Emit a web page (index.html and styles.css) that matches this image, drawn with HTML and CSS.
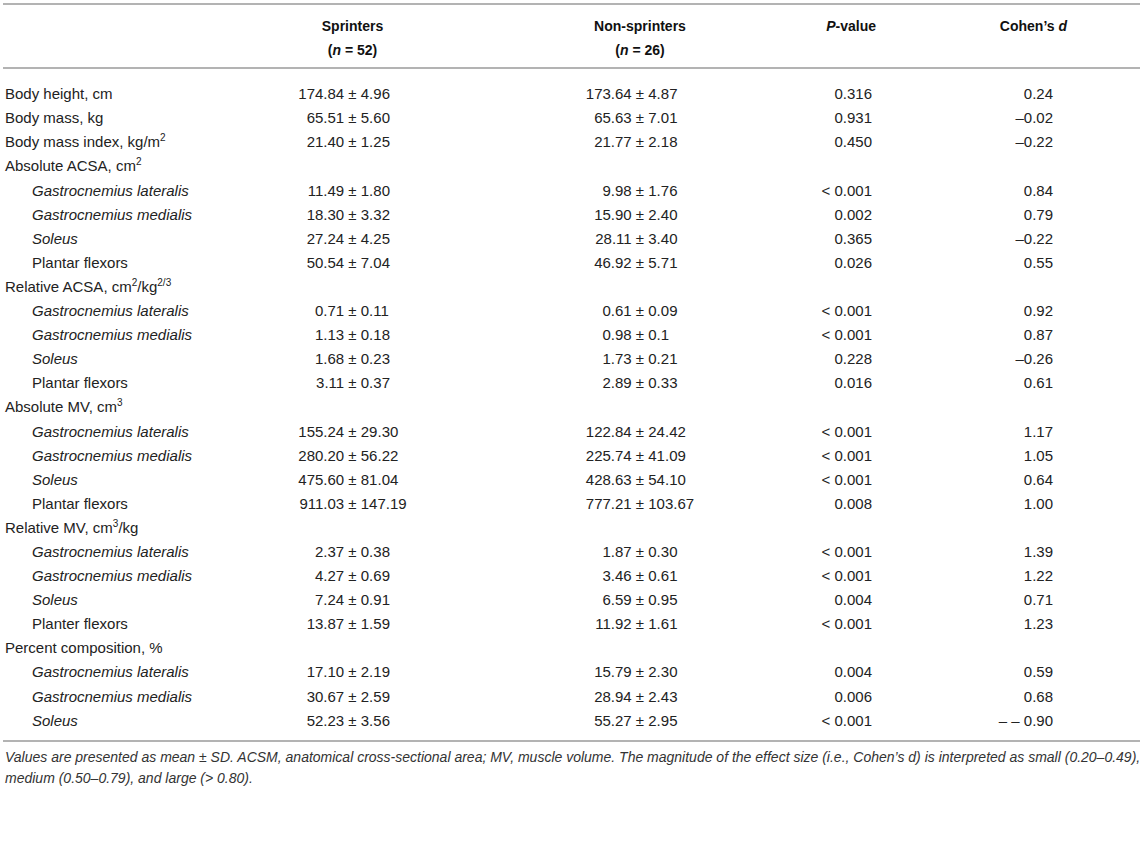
FILE: index.html
```html
<!DOCTYPE html>
<html lang="en">
<head>
<meta charset="utf-8">
<title>Table</title>
<link rel="stylesheet" href="styles.css">
</head>
<body>
<table class="data">
  <colgroup>
    <col class="c-label"><col class="c-spr"><col class="c-non"><col class="c-p"><col class="c-d">
  </colgroup>
  <thead>
    <tr class="h1">
      <th></th>
      <th class="num">Sprinters</th>
      <th class="non">Non-sprinters</th>
      <th class="p"><i>P</i>-value</th>
      <th class="d">Cohen’s <i>d</i></th>
    </tr>
    <tr class="h2">
      <th></th>
      <th class="num">(<i>n</i> = 52)</th>
      <th class="non">(<i>n</i> = 26)</th>
      <th></th>
      <th></th>
    </tr>
  </thead>
  <tbody>
    <tr class="first"><td class="lab">Body height, cm</td><td class="num"><span class="m">174.84</span> ± <span class="s">4.96</span></td><td class="non"><span class="m">173.64</span> ± <span class="s">4.87</span></td><td class="p">0.316</td><td class="d">0.24</td></tr>
    <tr><td class="lab">Body mass, kg</td><td class="num"><span class="m">65.51</span> ± <span class="s">5.60</span></td><td class="non"><span class="m">65.63</span> ± <span class="s">7.01</span></td><td class="p">0.931</td><td class="d">–0.02</td></tr>
    <tr><td class="lab">Body mass index, kg/m<sup>2</sup></td><td class="num"><span class="m">21.40</span> ± <span class="s">1.25</span></td><td class="non"><span class="m">21.77</span> ± <span class="s">2.18</span></td><td class="p">0.450</td><td class="d">–0.22</td></tr>
    <tr><td class="lab">Absolute ACSA, cm<sup>2</sup></td><td></td><td></td><td></td><td></td></tr>
    <tr><td class="sub"><i>Gastrocnemius lateralis</i></td><td class="num"><span class="m">11.49</span> ± <span class="s">1.80</span></td><td class="non"><span class="m">9.98</span> ± <span class="s">1.76</span></td><td class="p">&lt; 0.001</td><td class="d">0.84</td></tr>
    <tr><td class="sub"><i>Gastrocnemius medialis</i></td><td class="num"><span class="m">18.30</span> ± <span class="s">3.32</span></td><td class="non"><span class="m">15.90</span> ± <span class="s">2.40</span></td><td class="p">0.002</td><td class="d">0.79</td></tr>
    <tr><td class="sub"><i>Soleus</i></td><td class="num"><span class="m">27.24</span> ± <span class="s">4.25</span></td><td class="non"><span class="m">28.11</span> ± <span class="s">3.40</span></td><td class="p">0.365</td><td class="d">–0.22</td></tr>
    <tr><td class="sub">Plantar flexors</td><td class="num"><span class="m">50.54</span> ± <span class="s">7.04</span></td><td class="non"><span class="m">46.92</span> ± <span class="s">5.71</span></td><td class="p">0.026</td><td class="d">0.55</td></tr>
    <tr><td class="lab">Relative ACSA, cm<sup>2</sup>/kg<sup>2/3</sup></td><td></td><td></td><td></td><td></td></tr>
    <tr><td class="sub"><i>Gastrocnemius lateralis</i></td><td class="num"><span class="m">0.71</span> ± <span class="s">0.11</span></td><td class="non"><span class="m">0.61</span> ± <span class="s">0.09</span></td><td class="p">&lt; 0.001</td><td class="d">0.92</td></tr>
    <tr><td class="sub"><i>Gastrocnemius medialis</i></td><td class="num"><span class="m">1.13</span> ± <span class="s">0.18</span></td><td class="non"><span class="m">0.98</span> ± <span class="s">0.1</span></td><td class="p">&lt; 0.001</td><td class="d">0.87</td></tr>
    <tr><td class="sub"><i>Soleus</i></td><td class="num"><span class="m">1.68</span> ± <span class="s">0.23</span></td><td class="non"><span class="m">1.73</span> ± <span class="s">0.21</span></td><td class="p">0.228</td><td class="d">–0.26</td></tr>
    <tr><td class="sub">Plantar flexors</td><td class="num"><span class="m">3.11</span> ± <span class="s">0.37</span></td><td class="non"><span class="m">2.89</span> ± <span class="s">0.33</span></td><td class="p">0.016</td><td class="d">0.61</td></tr>
    <tr><td class="lab">Absolute MV, cm<sup>3</sup></td><td></td><td></td><td></td><td></td></tr>
    <tr><td class="sub"><i>Gastrocnemius lateralis</i></td><td class="num"><span class="m">155.24</span> ± <span class="s">29.30</span></td><td class="non"><span class="m">122.84</span> ± <span class="s">24.42</span></td><td class="p">&lt; 0.001</td><td class="d">1.17</td></tr>
    <tr><td class="sub"><i>Gastrocnemius medialis</i></td><td class="num"><span class="m">280.20</span> ± <span class="s">56.22</span></td><td class="non"><span class="m">225.74</span> ± <span class="s">41.09</span></td><td class="p">&lt; 0.001</td><td class="d">1.05</td></tr>
    <tr><td class="sub"><i>Soleus</i></td><td class="num"><span class="m">475.60</span> ± <span class="s">81.04</span></td><td class="non"><span class="m">428.63</span> ± <span class="s">54.10</span></td><td class="p">&lt; 0.001</td><td class="d">0.64</td></tr>
    <tr><td class="sub">Plantar flexors</td><td class="num"><span class="m">911.03</span> ± <span class="s">147.19</span></td><td class="non"><span class="m">777.21</span> ± <span class="s">103.67</span></td><td class="p">0.008</td><td class="d">1.00</td></tr>
    <tr><td class="lab">Relative MV, cm<sup>3</sup>/kg</td><td></td><td></td><td></td><td></td></tr>
    <tr><td class="sub"><i>Gastrocnemius lateralis</i></td><td class="num"><span class="m">2.37</span> ± <span class="s">0.38</span></td><td class="non"><span class="m">1.87</span> ± <span class="s">0.30</span></td><td class="p">&lt; 0.001</td><td class="d">1.39</td></tr>
    <tr><td class="sub"><i>Gastrocnemius medialis</i></td><td class="num"><span class="m">4.27</span> ± <span class="s">0.69</span></td><td class="non"><span class="m">3.46</span> ± <span class="s">0.61</span></td><td class="p">&lt; 0.001</td><td class="d">1.22</td></tr>
    <tr><td class="sub"><i>Soleus</i></td><td class="num"><span class="m">7.24</span> ± <span class="s">0.91</span></td><td class="non"><span class="m">6.59</span> ± <span class="s">0.95</span></td><td class="p">0.004</td><td class="d">0.71</td></tr>
    <tr><td class="sub">Planter flexors</td><td class="num"><span class="m">13.87</span> ± <span class="s">1.59</span></td><td class="non"><span class="m">11.92</span> ± <span class="s">1.61</span></td><td class="p">&lt; 0.001</td><td class="d">1.23</td></tr>
    <tr><td class="lab">Percent composition, %</td><td></td><td></td><td></td><td></td></tr>
    <tr><td class="sub"><i>Gastrocnemius lateralis</i></td><td class="num"><span class="m">17.10</span> ± <span class="s">2.19</span></td><td class="non"><span class="m">15.79</span> ± <span class="s">2.30</span></td><td class="p">0.004</td><td class="d">0.59</td></tr>
    <tr><td class="sub"><i>Gastrocnemius medialis</i></td><td class="num"><span class="m">30.67</span> ± <span class="s">2.59</span></td><td class="non"><span class="m">28.94</span> ± <span class="s">2.43</span></td><td class="p">0.006</td><td class="d">0.68</td></tr>
    <tr class="last"><td class="sub"><i>Soleus</i></td><td class="num"><span class="m">52.23</span> ± <span class="s">3.56</span></td><td class="non"><span class="m">55.27</span> ± <span class="s">2.95</span></td><td class="p">&lt; 0.001</td><td class="d">– – 0.90</td></tr>
  </tbody>
</table>
<p class="note">Values are presented as mean ± SD. ACSM, anatomical cross-sectional area; MV, muscle volume. The magnitude of the effect size (i.e., Cohen’s d) is interpreted as small (0.20–0.49), medium (0.50–0.79), and large (&gt; 0.80).</p>
</body>
</html>
```

FILE: styles.css
```css
html, body {
  margin: 0;
  padding: 0;
  background: #ffffff;
}

body {
  font-family: "Liberation Sans", Arial, sans-serif;
  color: #222222;
  font-size: 15px;
}

.data {
  margin: 3px 0 0 3px;
  width: 1137px;
  border-collapse: collapse;
  table-layout: fixed;
  border-top: 2px solid #b3b3b3;
  border-bottom: 2px solid #b3b3b3;
}

.c-label { width: 252px; }
.c-spr { width: 195px; }
.c-non { width: 350px; }
.c-p { width: 80px; }
.c-d { width: 260px; }

.data th,
.data td {
  padding: 0;
  line-height: 24.1px;
  white-space: nowrap;
  vertical-align: middle;
}

.data th {
  font-weight: bold;
  font-size: 14px;
  color: #111111;
}

.data thead tr.h1 th { padding-top: 9px; }
.data thead tr.h2 th {
  padding-bottom: 5px;
  border-bottom: 2px solid #b3b3b3;
}

.data tbody tr.first td { padding-top: 13px; }
.data tbody tr.last td { padding-bottom: 7px; }

.data td.lab { padding-left: 2px; text-align: left; }
.data td.sub { padding-left: 29px; text-align: left; }

.data .num { text-align: center; }
.data .non { text-align: center; padding-left: 30px; }

.m {
  display: inline-block;
  width: 50px;
  text-align: right;
}
.s {
  display: inline-block;
  width: 50px;
  text-align: left;
}

.data th.p { text-align: right; padding-right: 4px; }
.data td.p { text-align: right; padding-right: 8px; }

.data th.d { text-align: right; padding-right: 73px; }
.data td.d { text-align: right; padding-right: 87px; }

sup {
  font-size: 10px;
  line-height: 0;
  vertical-align: 6px;
}

.note {
  margin: 5px 0 0 3px;
  padding-left: 2px;
  width: 1137px;
  font-style: italic;
  font-size: 14px;
  line-height: 21px;
  color: #333333;
}
```
